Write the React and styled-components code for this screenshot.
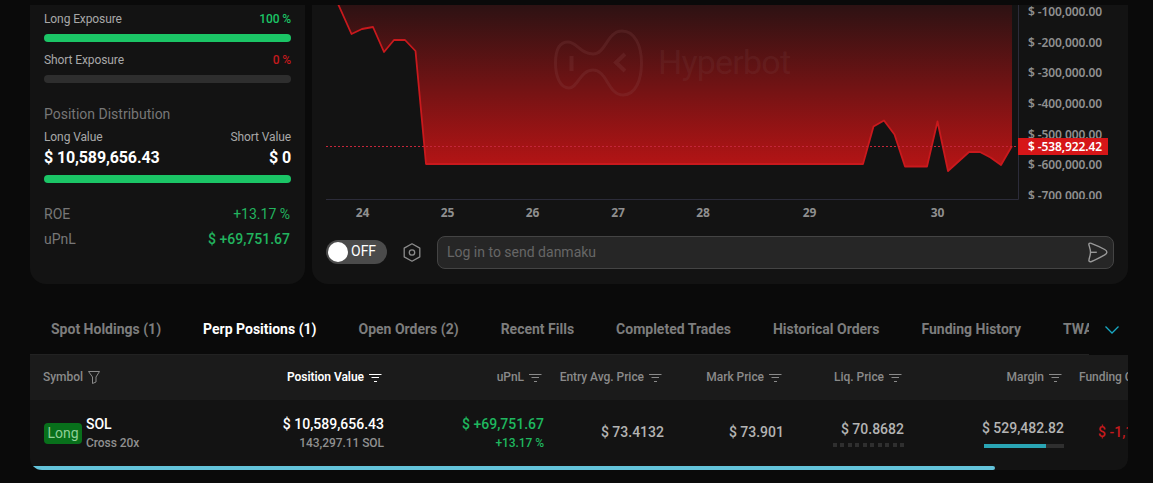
import React from "react";
import styled, { createGlobalStyle, css } from "styled-components";

const GlobalStyle = createGlobalStyle`
  * { box-sizing: border-box; }
  body {
    margin: 0;
    background: #0a0a0a;
    font-family: Roboto, "Liberation Sans", sans-serif;
    color: #fff;
    overflow: hidden;
  }
`;

const Page = styled.div`
  width: 1153px;
  height: 483px;
  padding: 5px 25px 0 30px;
  overflow: hidden;
  background: #0a0a0a;
`;

const TopPanels = styled.div`
  display: flex;
  gap: 7px;
  height: 279px;
`;

const Panel = styled.section`
  background: #131313;
  border-radius: 0 0 16px 16px;
`;

const SummaryPanel = styled(Panel)`
  width: 275px;
  padding: 5px 14px 0;
`;

const ChartPanel = styled(Panel)`
  width: 816px;
  display: flex;
  flex-direction: column;
`;

const Line = styled.div`
  display: flex;
  justify-content: space-between;
  align-items: center;
  white-space: nowrap;
  height: ${(p) => p.$h || 18}px;
  margin-top: ${(p) => p.$top || 0}px;
  font-size: ${(p) => p.$size || 12}px;
  font-weight: ${(p) => p.$weight || 400};
  letter-spacing: ${(p) => p.$track || 0}px;
  color: ${(p) => p.$color || "#a8a8a8"};
`;

const Value = styled.span`
  color: ${(p) => p.$color};
  font-weight: ${(p) => p.$weight || 500};
  padding-right: ${(p) => p.$inset || 0}px;
`;

const Bar = styled.div`
  height: 8px;
  border-radius: 4px;
  margin-top: ${(p) => p.$top}px;
  background: ${(p) => (p.$full ? "#1bc566" : "#2e2e2e")};
`;

const ChartSvg = styled.svg`
  display: block;
  flex: none;
`;

const AxisText = styled.text`
  font-family: "Noto Sans", "Open Sans", sans-serif;
  font-size: 12px;
  font-weight: ${(p) => p.$weight || 600};
  fill: ${(p) => p.$color || "#8f8f8f"};
`;

const WatermarkText = styled.text`
  font-family: Roboto, sans-serif;
  font-size: 34px;
  fill: rgba(130, 80, 80, 0.18);
`;

const DanmakuBar = styled.div`
  display: flex;
  align-items: center;
  height: 33px;
  margin-top: 11px;
  padding: 0 14px;
`;

const Toggle = styled.div`
  display: flex;
  align-items: center;
  gap: 3px;
  width: 61px;
  height: 24px;
  margin-top: -1px;
  padding: 0 2px;
  border-radius: 12px;
  background: #4b4b4b;
  font-size: 14px;
`;

const ToggleLabel = styled.span`
  padding-bottom: 2px;
`;

const Knob = styled.span`
  width: 20px;
  height: 20px;
  border-radius: 50%;
  background: #fff;
`;

const HexIcon = styled.svg`
  margin: 0 15px 0 15px;
`;

const MessageBox = styled.div`
  flex: 1;
  display: flex;
  align-items: center;
  justify-content: space-between;
  height: 33px;
  padding: 0 5px 0 9px;
  border: 1px solid #444;
  border-radius: 8px;
  background: #262626;
  color: #666;
  font-size: 14px;
`;

const Placeholder = styled.span`
  padding-bottom: 2px;
`;

const TabBar = styled.nav`
  display: flex;
  height: 71px;
  padding-top: 20px;
`;

const TabScroller = styled.div`
  display: flex;
  width: 1059px;
  overflow: hidden;
  border-bottom: 1px solid #222;
`;

const Tab = styled.div`
  flex: none;
  display: flex;
  align-items: center;
  height: 51px;
  padding: 0 21px 2px;
  font-size: 14px;
  font-weight: 700;
  white-space: nowrap;
  color: #7d7d7d;
  ${(p) =>
    p.$active &&
    css`
      color: #fff;
      border-bottom: 1px solid #fff;
      padding-bottom: 1px;
    `}
`;

const MoreTabs = styled.div`
  display: flex;
  align-items: center;
  padding-left: 15px;
`;

const Table = styled.section`
  width: 1098px;
  height: 115px;
  overflow: hidden;
  border-radius: 0 0 12px 12px;
  background: #131313;
`;

const GridRow = styled.div`
  display: grid;
  grid-template-columns: 120px 234px 160px 120px 120px 120px 160px 160px;
`;

const HeaderRow = styled(GridRow)`
  height: 45px;
  background: #1b1b1b;
  font-size: 12px;
  font-weight: 500;
  letter-spacing: -0.04px;
`;

const DataRow = styled(GridRow)`
  height: 66px;
`;

const HeaderCell = styled.div`
  display: flex;
  align-items: center;
  justify-content: ${(p) => (p.$left ? "flex-start" : "flex-end")};
  gap: 5px;
  padding: 0 ${(p) => (p.$left ? 0 : 2)}px 1px ${(p) => p.$left || 0}px;
  white-space: nowrap;
  color: ${(p) => (p.$active ? "#fff" : "#8a8a8a")};
  font-weight: ${(p) => (p.$active ? 600 : 500)};
`;

const Cell = styled.div`
  display: flex;
  flex-direction: column;
  justify-content: center;
  align-items: ${(p) => (p.$left ? "flex-start" : "flex-end")};
  padding-left: ${(p) => p.$left || 0}px;
  padding-top: ${(p) => p.$drop || 0}px;
  padding-bottom: ${(p) => p.$lift || 0}px;
  white-space: nowrap;
`;

const Amount = styled.div`
  font-size: 14px;
  line-height: 18px;
  font-weight: 500;
  color: ${(p) => p.$color || "#b4b4b4"};
`;

const SubAmount = styled.div`
  font-size: 12px;
  line-height: 18px;
  padding-top: 1px;
  font-weight: 500;
  letter-spacing: -0.06px;
  color: ${(p) => p.$color || "#8f8f8f"};
`;

const SymbolCell = styled.div`
  display: flex;
  align-items: center;
  gap: 4px;
  padding-left: 14px;
  white-space: nowrap;
`;

const SideTag = styled.span`
  display: flex;
  align-items: center;
  justify-content: center;
  width: 38px;
  height: 21px;
  padding-bottom: 1px;
  border-radius: 4px;
  background: #08701b;
  color: #8fcf98;
  font-size: 14px;
`;

const Dots = styled.div`
  display: flex;
  justify-content: space-between;
  width: 71px;
  margin-top: 5px;
  span {
    width: 4px;
    height: 4px;
    background: #2f2f2f;
  }
`;

const MarginTrack = styled.div`
  width: 80px;
  height: 4px;
  margin-top: 7px;
  background: #2f2f2f;
`;

const MarginFill = styled.div`
  width: 62px;
  height: 4px;
  background: #2aa5b4;
`;

const ScrollThumb = styled.div`
  width: 965px;
  height: 4px;
  border-radius: 0 2px 2px 0;
  background: #63c3da;
`;

const TABS = [
  "Spot Holdings (1)",
  "Perp Positions (1)",
  "Open Orders (2)",
  "Recent Fills",
  "Completed Trades",
  "Historical Orders",
  "Funding History",
  "TWAP",
];

const PRICES = [
  ["$ -100,000.00", 12],
  ["$ -200,000.00", 42.5],
  ["$ -300,000.00", 73],
  ["$ -400,000.00", 104],
  ["$ -500,000.00", 134.5],
  ["$ -600,000.00", 165],
  ["$ -700,000.00", 195.5],
];

const DAYS = [
  [24, 362.5],
  [25, 447.5],
  [26, 532.5],
  [27, 618],
  [28, 703],
  [29, 809.5],
  [30, 937.5],
];

const SERIES =
  "336,0 338.5,5 351.5,34 362,29 373,27 384,52 394,40 405,40 415.5,51 426,164 863,164 873.5,126.5 884,120.5 894.5,134.5 905,166.5 927,166.5 937.5,121.5 948,171 969,152 980,152 990.5,157.5 1001,165 1012,146";

const PnlChart = () => (
  <ChartSvg width="816" height="220" viewBox="312 5 816 220">
    <defs>
      <linearGradient id="loss" gradientUnits="userSpaceOnUse" x1="0" y1="5" x2="0" y2="171">
        <stop offset="0" stopColor="#2d1213" />
        <stop offset="1" stopColor="#b81415" />
      </linearGradient>
      <clipPath id="plot">
        <rect x="312" y="5" width="816" height="194" />
      </clipPath>
    </defs>
    <g clipPath="url(#plot)">
      <polygon points={`${SERIES} 1012,0`} fill="url(#loss)" />
      <g fill="none" stroke="rgba(150,90,90,0.18)" strokeWidth="3">
        <path d="M568 42C559 42 555.5 51 555.5 63C555.5 76 560 88 569 88C578 88 580 70 593 70C607 70 608 95 623 95C636 95 641.5 79 641.5 63C641.5 46 635 31 622 31C607 31 606 54 593 54C580 54 577 42 568 42Z" />
        <path d="M571.5 56V71" strokeWidth="4" />
        <path d="M625 54L616 62.5L625 71" strokeWidth="4" />
      </g>
      <WatermarkText x="658" y="74" textLength="133">Hyperbot</WatermarkText>
      <polyline points={SERIES} fill="none" stroke="#c9191d" strokeWidth="1.8" strokeLinejoin="round" />
      <path d="M326 146.5H1018" stroke="#c4263a" strokeDasharray="2 2" />
      {PRICES.map(([label, y]) => (
        <AxisText key={label} x="1028" y={y + 4} textLength="74">
          {label}
        </AxisText>
      ))}
    </g>
    <path d="M326 199.5H1018.5V5" fill="none" stroke="#2c2c3a" />
    <rect x="1018" y="138" width="90" height="17" fill="#d61618" />
    <AxisText x="1028" y="151" textLength="74" $color="#fff">
      $ -538,922.42
    </AxisText>
    {DAYS.map(([day, x]) => (
      <AxisText key={day} x={x} y="217" textAnchor="middle" $weight={700}>
        {day}
      </AxisText>
    ))}
  </ChartSvg>
);

const SortIcon = () => (
  <svg width="13" height="9" viewBox="0 0 13 9" fill="none" stroke="currentColor">
    <path d="M0 1.5H12.5M2.5 4.5H10M5 8.5H8" />
  </svg>
);

const FilterIcon = () => (
  <svg width="12" height="14" viewBox="0 0 12 14" fill="none" stroke="currentColor">
    <path d="M0.5 1.5H11.5L8 7V12L4.5 13.5V7Z" strokeLinejoin="round" />
  </svg>
);

const SortHeader = ({ label, active }) => (
  <HeaderCell $active={active}>
    {label}
    <SortIcon />
  </HeaderCell>
);

export default function App() {
  return (
    <>
      <GlobalStyle />
      <Page>
        <TopPanels>
          <SummaryPanel>
            <Line $track={-0.1}>
              Long Exposure<Value $color="#1bc566">100 %</Value>
            </Line>
            <Bar $top={6} $full />
            <Line $top={9} $track={-0.1}>
              Short Exposure<Value $color="#c41a1d">0 %</Value>
            </Line>
            <Bar $top={6} />
            <Line $top={21} $h={20} $size={14} $color="#777">
              Position Distribution
            </Line>
            <Line $top={4} $track={-0.1}>
              <span>Long Value</span>
              <span>Short Value</span>
            </Line>
            <Line $h={22} $size={16} $weight={700} $color="#fff" $track={-0.13}>
              <span>$ 10,589,656.43</span>
              <span>$ 0</span>
            </Line>
            <Bar $top={7} $full />
            <Line $top={21} $h={20} $size={14} $color="#777">
              ROE
              <Value $color="#22b45f" $weight={400} $inset={1}>
                +13.17 %
              </Value>
            </Line>
            <Line $top={5} $h={20} $size={14} $color="#777">
              uPnL
              <Value $color="#22b45f" $inset={1}>
                $ +69,751.67
              </Value>
            </Line>
          </SummaryPanel>
          <ChartPanel>
            <PnlChart />
            <DanmakuBar>
              <Toggle>
                <Knob />
                <ToggleLabel>OFF</ToggleLabel>
              </Toggle>
              <HexIcon width="20" height="20" viewBox="0 0 20 20" fill="none" stroke="#8c8c8c" strokeWidth="1.3">
                <path d="M10 0.8L17.8 5.1V13.9L10 18.2L2.2 13.9V5.1Z" strokeLinejoin="round" />
                <circle cx="10" cy="9.5" r="2.7" />
              </HexIcon>
              <MessageBox>
                <Placeholder>Log in to send danmaku</Placeholder>
                <svg width="22" height="22" viewBox="0 0 22 22" fill="none" stroke="#999" strokeWidth="1.4">
                  <path
                    d="M3 3.2C2.4 1.5 3.6 0.8 5.2 1.3C9 2.7 14.500 5.200 18.700 7.500C21.600 9.200 21.600 11.200 18.700 12.900C14.500 15.300 9.500 18 5.500 19.500C3.600 20.100 2.500 19.300 3 17.500C3.500 15.300 4.500 13 4.500 10.300C4.500 7.800 3.700 5.500 3 3.200Z"
                    strokeLinejoin="round"
                  />
                  <path d="M4.500 10.300H10.800" />
                </svg>
              </MessageBox>
            </DanmakuBar>
          </ChartPanel>
        </TopPanels>
        <TabBar>
          <TabScroller>
            {TABS.map((name, i) => (
              <Tab key={name} $active={i === 1}>
                {name}
              </Tab>
            ))}
          </TabScroller>
          <MoreTabs>
            <svg width="16" height="10" viewBox="0 0 16 10" fill="none" stroke="#18a9c4" strokeWidth="1.3">
              <path d="M1.5 1.5L8 8L14.5 1.5" />
            </svg>
          </MoreTabs>
        </TabBar>
        <Table>
          <HeaderRow>
            <HeaderCell $left={13}>
              Symbol
              <FilterIcon />
            </HeaderCell>
            <SortHeader label="Position Value" active />
            <SortHeader label="uPnL" />
            <SortHeader label="Entry Avg. Price" />
            <SortHeader label="Mark Price" />
            <SortHeader label="Liq. Price" />
            <SortHeader label="Margin" />
            <HeaderCell $left={15}>Funding Cost</HeaderCell>
          </HeaderRow>
          <DataRow>
            <SymbolCell>
              <SideTag>Long</SideTag>
              <div>
                <Amount $color="#fff">SOL</Amount>
                <SubAmount>Cross 20x</SubAmount>
              </div>
            </SymbolCell>
            <Cell>
              <Amount $color="#fff">$ 10,589,656.43</Amount>
              <SubAmount>143,297.11 SOL</SubAmount>
            </Cell>
            <Cell>
              <Amount $color="#1fb75f">$ +69,751.67</Amount>
              <SubAmount $color="#1fb75f">+13.17 %</SubAmount>
            </Cell>
            <Cell $lift={2}>
              <Amount>$ 73.4132</Amount>
            </Cell>
            <Cell $lift={2}>
              <Amount>$ 73.901</Amount>
            </Cell>
            <Cell $drop={1}>
              <Amount>$ 70.8682</Amount>
              <Dots>
                {Array.from({ length: 10 }, (_, i) => (
                  <span key={i} />
                ))}
              </Dots>
            </Cell>
            <Cell>
              <Amount>$ 529,482.82</Amount>
              <MarginTrack>
                <MarginFill />
              </MarginTrack>
            </Cell>
            <Cell $left={34} $lift={2}>
              <Amount $color="#c41a1d">$ -1,176.52</Amount>
            </Cell>
          </DataRow>
          <ScrollThumb />
        </Table>
      </Page>
    </>
  );
}
